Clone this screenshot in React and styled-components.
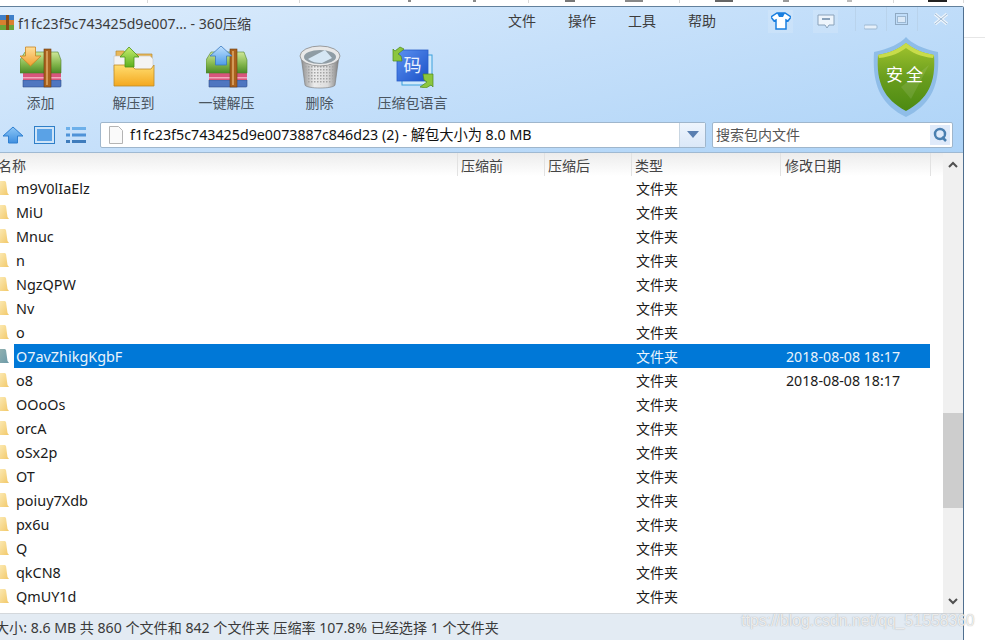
import React from 'react'
import styled, { createGlobalStyle } from 'styled-components'

const Global = createGlobalStyle`
  html, body {
    margin: 0;
    padding: 0;
    background: #fff;
    overflow: hidden;
  }
  body {
    font-family: 'Noto Sans', 'Noto Sans CJK SC', sans-serif;
  }
`

const Page = styled.div`
  width: 985px;
  height: 640px;
  position: relative;
  overflow: hidden;
  background: #fff;
`

const TopStrip = styled.div`
  height: 6px;
  width: 964px;
  display: flex;
  align-items: flex-start;
`

const StripCell = styled.div`
  width: ${p => p.w}px;
  height: 3px;
  flex: none;
  display: flex;
  align-items: flex-start;
  border-right: 1px solid #d9d9d9;
  box-sizing: border-box;
`

const Sliver = styled.div`
  width: ${p => p.w}px;
  height: 2px;
  margin-left: ${p => p.ml}px;
  background: ${p => p.c};
`

const SideLine = styled.div`
  position: absolute;
  left: 964px;
  right: 0;
  top: 37px;
  height: 1px;
  background: #e6e6e6;
`

const Window = styled.div`
  width: 964px;
  height: 634px;
  box-sizing: border-box;
  border-top: 1px solid #62809c;
  border-right: 1px solid #4f6f8f;
  border-top-right-radius: 2px;
  display: flex;
  flex-direction: column;
  overflow: hidden;
`

const Head = styled.div`
  height: 146px;
  flex: none;
  background: linear-gradient(168deg, #dcecfc 0%, #c6e0fa 45%, #add3f7 100%);
  border-bottom: 1px solid #9fb9d2;
  box-sizing: border-box;
`

const TitleRow = styled.div`
  height: 30px;
  display: flex;
  align-items: center;
`

const Title = styled.span`
  font-size: 14.1px;
  color: #3c3c3c;
  margin-left: 4px;
  margin-top: 2px;
  white-space: nowrap;
  width: 490px;
`

const Menu = styled.div`
  display: flex;
  margin-bottom: 4px;
`

const MenuItem = styled.span`
  width: 60px;
  font-size: 14px;
  color: #3d3d3d;
`

const SkinBtn = styled.div`
  width: 25px;
  height: 23px;
  margin-left: ${p => p.ml}px;
  margin-bottom: 2px;
  display: flex;
  align-items: center;
  justify-content: center;
  background: rgba(255, 255, 255, 0.14);
`

const Controls = styled.div`
  display: flex;
  margin-left: 17px;
  height: 24px;
  align-self: flex-start;
`

const Control = styled.div`
  width: ${p => p.w}px;
  height: 24px;
  border-left: 1px solid #b9d3ec;
  display: flex;
  align-items: ${p => p.end ? 'flex-end' : 'center'};
  justify-content: center;
  box-sizing: border-box;
`

const ToolRow = styled.div`
  height: 84px;
  display: flex;
  justify-content: space-between;
`

const Tools = styled.div`
  display: flex;
  margin-left: -6px;
  padding-top: 9px;
`

const Tool = styled.div`
  width: 93px;
  display: flex;
  flex-direction: column;
  align-items: center;
  gap: 6px;
`

const ToolIcon = styled.div`
  height: 42px;
  display: flex;
  align-items: center;
  justify-content: center;
`

const ToolLabel = styled.span`
  font-size: 14px;
  line-height: 18px;
  color: #4a5560;
  white-space: nowrap;
`

const ShieldWrap = styled.div`
  margin-right: 24px;
`

const AddressRow = styled.div`
  height: 27px;
  display: flex;
  align-items: center;
`

const NavBtn = styled.div`
  width: ${p => p.w}px;
  flex: none;
  display: flex;
  justify-content: center;
`

const Combo = styled.div`
  width: 606px;
  height: 26px;
  margin-left: 12px;
  background: #fff;
  border: 1px solid #9fb6cc;
  border-radius: 2px;
  box-sizing: border-box;
  display: flex;
  align-items: center;
  padding-left: 8px;
`

const ComboText = styled.span`
  flex: 1;
  font-size: 14.25px;
  color: #111;
  white-space: nowrap;
  margin-left: 7px;
  margin-bottom: 2px;
`

const ComboDrop = styled.div`
  width: 25px;
  height: 24px;
  border-left: 1px solid #c9d6e2;
  background: linear-gradient(#eef5fd, #dbe8f8);
  display: flex;
  align-items: center;
  justify-content: center;
`

const Search = styled.div`
  width: 241px;
  height: 26px;
  margin-left: 6px;
  background: #fff;
  border: 1px solid #9fb6cc;
  border-radius: 2px;
  box-sizing: border-box;
  display: flex;
  align-items: center;
  justify-content: space-between;
  padding: 0 2px 0 3px;
`

const SearchHint = styled.span`
  font-size: 14px;
  color: #555;
  margin-bottom: 2px;
`

const SearchBtn = styled.div`
  width: 20px;
  height: 20px;
  background: #dfeafa;
  display: flex;
  align-items: center;
  justify-content: center;
`

const Main = styled.div`
  flex: 1;
  display: flex;
  min-height: 0;
`

const ListPane = styled.div`
  width: 943px;
  display: flex;
  flex-direction: column;
  overflow: hidden;
`

const ListHead = styled.div`
  height: 23px;
  flex: none;
  display: flex;
  background: linear-gradient(#ececec, #fff);
`

const HeadCell = styled.div`
  width: ${p => p.w}px;
  flex: none;
  box-sizing: border-box;
  padding-left: ${p => p.pl || 0}px;
  margin-left: ${p => p.ml || 0}px;
  border-right: 1px solid #e2e2e2;
  font-size: 14px;
  line-height: 25px;
  color: #444;
  white-space: nowrap;
`

const Rows = styled.div`
  flex: 1;
  overflow: hidden;
`

const Row = styled.div`
  height: 24px;
  display: flex;
  align-items: center;
  color: #1a1a1a;
`

const FolderSlot = styled.div`
  width: 14px;
  flex: none;
  display: flex;
  overflow: hidden;
`

const RowBody = styled.div`
  width: 916px;
  height: 24px;
  display: flex;
  align-items: center;
  background: ${p => p.sel ? '#0078d7' : 'transparent'};
  color: ${p => p.sel ? '#eaf4fc' : '#1a1a1a'};
`

const Name = styled.span`
  width: 620px;
  flex: none;
  margin-left: 2px;
  font-size: 14.4px;
  white-space: nowrap;
`

const Kind = styled.span`
  width: 150px;
  flex: none;
  font-size: 14px;
`

const When = styled.span`
  font-size: 14.2px;
  white-space: nowrap;
`

const Scrollbar = styled.div`
  width: 20px;
  flex: none;
  background: #f0f0f0;
  display: flex;
  flex-direction: column;
  align-items: center;
`

const ArrowUp = styled.div`
  height: 22px;
  display: flex;
  align-items: center;
  flex: none;
`

const ArrowDown = styled.div`
  flex: 1;
  display: flex;
  align-items: flex-end;
  padding-bottom: 8px;
`

const Thumb = styled.div`
  width: 20px;
  height: 95px;
  margin-top: 238px;
  flex: none;
  background: #cdcdcd;
`

const Status = styled.div`
  height: 27px;
  flex: none;
  background: #e3ebf3;
  border-top: 1px solid #d4d8dc;
  box-sizing: border-box;
  font-size: 14.1px;
  line-height: 27px;
  color: #3a3a3a;
  white-space: nowrap;
  text-indent: -5px;
`

const Watermark = styled.div`
  position: absolute;
  left: 741px;
  top: 611px;
  font-family: 'Liberation Sans', sans-serif;
  font-size: 15.8px;
  line-height: 20px;
  color: rgba(255, 255, 255, 0.8);
  text-shadow: 0 0 1px rgba(120, 120, 120, 0.7);
  white-space: nowrap;
`

const Archive = ({ arrow = 'down', id }) => {
  const up = arrow === 'up'
  return (
    <svg width="42" height="42" viewBox="0 0 42 42">
      <defs>
        <linearGradient id={id + 'g'} x1="0" y1="0" x2="0" y2="1">
          <stop offset="0" stopColor="#cfe89a" />
          <stop offset=".6" stopColor="#80b44a" />
          <stop offset="1" stopColor="#4c8a28" />
        </linearGradient>
        <linearGradient id={id + 'a'} x1="0" y1="0" x2="0" y2="1">
          <stop offset="0" stopColor={up ? '#bfe0ff' : '#ffdf9a'} />
          <stop offset="1" stopColor={up ? '#4f9de8' : '#f0a030'} />
        </linearGradient>
      </defs>
      <path d="M3 34h38v6a1 1 0 0 1-1 1H3z" fill="#4f76c0" stroke="#2f4f8a" strokeWidth=".6" />
      <rect x="3" y="27" width="38" height="7" fill="#d8557c" />
      <rect x="3" y="31" width="38" height="1.500" fill="#f2a8bb" />
      <path d="M5 6h33l3 8v13H0V14z" fill={`url(#${id}g)`} stroke="#4f7f2c" strokeWidth=".6" />
      <rect x="24" y="3" width="7" height="38" fill="#a9621e" stroke="#6f3d10" strokeWidth=".6" />
      <rect x="26" y="5" width="2" height="34" fill="#d39a58" />
      {up
        ? <path d="M15 0 4 10h5.500v9h11v-9H26z" fill={`url(#${id}a)`} stroke="#3a78c0" strokeWidth=".8" />
        : <path d="M5.500 1h10v9H21L10.500 20 0 10h5.500z" fill={`url(#${id}a)`} stroke="#c98420" strokeWidth=".8" />}
    </svg>
  )
}

const OpenFolder = () => (
  <svg width="42" height="42" viewBox="0 0 42 42">
    <defs>
      <linearGradient id="ofg" x1="0" y1="0" x2="0" y2="1">
        <stop offset="0" stopColor="#ffdd70" />
        <stop offset="1" stopColor="#f4a81e" />
      </linearGradient>
      <linearGradient id="ofa" x1="0" y1="0" x2="0" y2="1">
        <stop offset="0" stopColor="#c8ee70" />
        <stop offset="1" stopColor="#5cb01e" />
      </linearGradient>
    </defs>
    <path d="M3 5h8l2 3h26v14H3z" fill="#e8b85a" stroke="#b98a30" strokeWidth=".7" />
    <path d="M1 10h36l3 3v12H1z" fill="#f4f4f4" stroke="#c4c4c4" strokeWidth=".6" />
    <path d="M1 19h17l4 4h16l3-4v21H1z" fill="url(#ofg)" stroke="#bd8a2a" strokeWidth=".8" />
    <path d="M16 1 7 11h5v10h9V11h5z" fill="url(#ofa)" stroke="#4d9418" strokeWidth=".8" />
  </svg>
)

const TrashCan = () => (
  <svg width="42" height="44" viewBox="0 0 42 44">
    <defs>
      <linearGradient id="tcg" x1="0" y1="0" x2="1" y2="0">
        <stop offset="0" stopColor="#8c8c8c" />
        <stop offset=".35" stopColor="#ececec" />
        <stop offset=".7" stopColor="#dcdcdc" />
        <stop offset="1" stopColor="#7d7d7d" />
      </linearGradient>
      <pattern id="tcp" width="3" height="3" patternUnits="userSpaceOnUse">
        <rect width="1.500" height="1.500" fill="#a4a4a4" />
      </pattern>
    </defs>
    <path d="M2 11 6 40c1 4 29 4 30 0l4-29z" fill="url(#tcg)" stroke="#777" strokeWidth=".6" />
    <path d="M6 20l3 18c2 1.500 22 1.500 24 0l3-18z" fill="url(#tcp)" />
    <ellipse cx="21" cy="11" rx="20" ry="10" fill="#e8e8e8" stroke="#888" strokeWidth=".8" />
    <ellipse cx="21" cy="12" rx="16" ry="7" fill="#8f9ca4" />
    <path d="M9 14 26 5l7 8-10 5c-6 0-10-1-14-4z" fill="#d5e6f4" />
  </svg>
)

const CodeBook = () => (
  <svg width="42" height="42" viewBox="0 0 42 42">
    <defs>
      <linearGradient id="cbg" x1="0" y1="0" x2="1" y2="1">
        <stop offset="0" stopColor="#5a90f0" />
        <stop offset="1" stopColor="#1c52c8" />
      </linearGradient>
    </defs>
    <rect x="10" y="9" width="30" height="30" fill="#cfe9fb" stroke="#3aa0dc" strokeWidth="1" />
    <rect x="5" y="4" width="31" height="31" fill="url(#cbg)" stroke="#2a5ec8" strokeWidth=".8" />
    <text x="20.500" y="26" textAnchor="middle" fontSize="18" fill="#e8f0ff" fontFamily="'Noto Sans CJK SC', sans-serif">码</text>
    <path d="M1 15V3l2 2 5-4 4 2-6 5 3 2 1 5z" fill="#8cc63e" stroke="#4f8a1a" strokeWidth=".7" />
    <path d="M41 28v13l-2-2-5 3-6-1 7-5-3-2-1-6z" fill="#8cc63e" stroke="#4f8a1a" strokeWidth=".7" />
  </svg>
)

const Shield = () => (
  <svg width="66" height="80" viewBox="0 0 66 80">
    <defs>
      <linearGradient id="shg" x1="0" y1="0" x2="0" y2="1">
        <stop offset="0" stopColor="#a2c42e" />
        <stop offset=".5" stopColor="#6a9e1e" />
        <stop offset="1" stopColor="#4c8a12" />
      </linearGradient>
    </defs>
    <path d="M33 0C28 6 16 12 1 15c-2 32 6 52 32 65 26-13 34-33 32-65C50 12 38 6 33 0z" fill="#8fbde8" />
    <path d="M33 6C27 11 17 16 5 18c-2 28 6 44 28 56 22-12 30-28 28-56C49 16 39 11 33 6z" fill="url(#shg)" />
    <path d="M33 6C27 11 17 16 5 18l1 3C18 20 28 15 33 11c5 4 15 9 27 10l1-3C49 16 39 11 33 6z" fill="#c8dc4a" />
    <path d="M56 28 38 62 28 50z" fill="#fff" opacity=".1" />
    <text x="33" y="44" textAnchor="middle" fontSize="17" letterSpacing="3" fill="#fff" fontFamily="'Noto Sans CJK SC', sans-serif">安全</text>
  </svg>
)

const Folder = ({ sel }) => (
  <svg width="10" height="16" viewBox="0 0 10 16">
    <defs>
      <linearGradient id={sel ? 'fds' : 'fdn'} x1="0" y1="0" x2="1" y2="1">
        <stop offset="0" stopColor={sel ? '#8fb0b0' : '#fbe8b0'} />
        <stop offset="1" stopColor={sel ? '#6c9aa8' : '#f2c868'} />
      </linearGradient>
    </defs>
    <path d="M0 1h5l1 1 1.500 11 1.500 2H0z" fill={`url(#${sel ? 'fds' : 'fdn'})`} />
  </svg>
)

const rows = [
  ['m9V0lIaElz'], ['MiU'], ['Mnuc'], ['n'], ['NgzQPW'], ['Nv'], ['o'],
  ['O7avZhikgKgbF', '2018-08-08 18:17', true],
  ['o8', '2018-08-08 18:17'],
  ['OOoOs'], ['orcA'], ['oSx2p'], ['OT'], ['poiuy7Xdb'], ['px6u'], ['Q'], ['qkCN8'], ['QmUY1d']
]

const tools = [
  ['添加', <Archive id="ad" />],
  ['解压到', <OpenFolder />],
  ['一键解压', <Archive id="ke" arrow="up" />],
  ['删除', <TrashCan />],
  ['压缩包语言', <CodeBook />]
]

export default function App() {
  return (
    <Page>
      <Global />
      <TopStrip>
        <StripCell w={148} />
        <StripCell w={152} />
        <StripCell w={229}>
          <Sliver ml={108} w={3} c="#8a8a8a" />
          <Sliver ml={62} w={3} c="#8a8a8a" />
        </StripCell>
        <StripCell w={151}>
          <Sliver ml={36} w={10} c="#777" />
          <Sliver ml={50} w={18} c="#888" />
        </StripCell>
        <StripCell w={214}>
          <Sliver ml={35} w={18} c="#666" />
          <Sliver ml={50} w={6} c="#999" />
          <Sliver ml={58} w={5} c="#bbb" />
        </StripCell>
        <StripCell w={70}>
          <Sliver ml={34} w={19} c="#222" />
        </StripCell>
      </TopStrip>
      <SideLine />
      <Window>
        <Head>
          <TitleRow>
            <svg width="14" height="17" viewBox="0 0 14 17">
              <rect y="1" width="14" height="5" fill="#3f7fc8" />
              <rect y="6" width="14" height="5" fill="#d98030" />
              <rect y="11" width="14" height="5" fill="#6aa63a" />
              <rect x="6" y="1" width="3" height="15" fill="#8a4c14" />
            </svg>
            <Title>f1fc23f5c743425d9e007... - 360压缩</Title>
            <Menu>
              {['文件', '操作', '工具', '帮助'].map(m => <MenuItem key={m}>{m}</MenuItem>)}
            </Menu>
            <SkinBtn ml={20}>
              <svg width="20" height="18" viewBox="0 0 20 18">
                <path d="M6 1h8l6 4-3 4-2-1v9H5V8L3 9 0 5z" fill="#fff" stroke="#1a7fe0" strokeWidth="1.500" />
                <path d="M6 1h8l-2 4H8z" fill="#1a7fe0" />
              </svg>
            </SkinBtn>
            <SkinBtn ml={20}>
              <svg width="18" height="15" viewBox="0 0 18 15">
                <path d="M1 1h16v10h-5l-2 3-2-3H1z" fill="#eef5fc" stroke="#8aa2ba" />
                <rect x="5" y="4" width="8" height="2" fill="#8aa2ba" />
              </svg>
            </SkinBtn>
            <Controls>
              <Control w={31} end>
                <svg width="14" height="14" viewBox="0 0 14 14"><rect y="8" width="13" height="4" rx="1" fill="#e6f0fa" stroke="#9db8d2" /></svg>
              </Control>
              <Control w={31}>
                <svg width="14" height="13" viewBox="0 0 14 13"><rect x=".5" y=".5" width="12" height="11" fill="none" stroke="#8fa9c2" /><rect x="2.500" y="3.500" width="8" height="6" fill="#dbe9f7" stroke="#9db8d2" /></svg>
              </Control>
              <Control w={46}>
                <svg width="16" height="14" viewBox="0 0 16 14"><path d="M2 2 14 12M14 2 2 12" stroke="#edf4fb" strokeWidth="3.200" /><path d="M2 2 14 12M14 2 2 12" stroke="#a3bcd4" strokeWidth="1" /></svg>
              </Control>
            </Controls>
          </TitleRow>
          <ToolRow>
            <Tools>
              {tools.map(([label, icon]) => (
                <Tool key={label}>
                  <ToolIcon>{icon}</ToolIcon>
                  <ToolLabel>{label}</ToolLabel>
                </Tool>
              ))}
            </Tools>
            <ShieldWrap><Shield /></ShieldWrap>
          </ToolRow>
          <AddressRow>
            <NavBtn w={25}>
              <svg width="22" height="18" viewBox="0 0 22 18">
                <defs>
                  <linearGradient id="upg" x1="0" y1="0" x2="0" y2="1">
                    <stop offset="0" stopColor="#8cc6f6" />
                    <stop offset="1" stopColor="#3f8fe0" />
                  </linearGradient>
                </defs>
                <path d="M11 1 1 10h5.500v7h9v-7H21z" fill="url(#upg)" stroke="#2f7fd0" />
              </svg>
            </NavBtn>
            <NavBtn w={38}>
              <svg width="21" height="18" viewBox="0 0 21 18"><rect x=".5" y=".5" width="20" height="17" fill="#cfe4f8" stroke="#2f7fc8" /><rect x="3" y="3" width="15" height="12" fill="#5aa2e6" /></svg>
            </NavBtn>
            <NavBtn w={25}>
              <svg width="20" height="18" viewBox="0 0 20 18">
                <rect y="1" width="4" height="3" fill="#6db0ea" /><rect x="6" y="1" width="14" height="3" fill="#6db0ea" />
                <rect y="7.500" width="4" height="3" fill="#4f93d8" /><rect x="6" y="7.500" width="14" height="3" fill="#4f93d8" />
                <rect y="14" width="4" height="3" fill="#3f7cbc" /><rect x="6" y="14" width="14" height="3" fill="#3f7cbc" />
              </svg>
            </NavBtn>
            <Combo>
              <svg width="14" height="18" viewBox="0 0 14 18"><path d="M.5.5h9l4 4v13H.5z" fill="#fafafa" stroke="#b4b4b4" /></svg>
              <ComboText>f1fc23f5c743425d9e0073887c846d23 (2) - 解包大小为 8.0 MB</ComboText>
              <ComboDrop>
                <svg width="12" height="7" viewBox="0 0 12 7"><path d="M0 0h12L6 7z" fill="#5a7fb0" /></svg>
              </ComboDrop>
            </Combo>
            <Search>
              <SearchHint>搜索包内文件</SearchHint>
              <SearchBtn>
                <svg width="15" height="15" viewBox="0 0 15 15"><circle cx="7" cy="7" r="5" fill="none" stroke="#4a7fb0" strokeWidth="2.500" /><path d="M9 10l4 4" stroke="#4a7fb0" strokeWidth="2.500" /></svg>
              </SearchBtn>
            </Search>
          </AddressRow>
        </Head>
        <Main>
          <ListPane>
            <ListHead>
              <HeadCell w={460} ml={-2}>名称</HeadCell>
              <HeadCell w={87} pl={3}>压缩前</HeadCell>
              <HeadCell w={87} pl={3}>压缩后</HeadCell>
              <HeadCell w={149} pl={3}>类型</HeadCell>
              <HeadCell w={150} pl={4}>修改日期</HeadCell>
            </ListHead>
            <Rows>
              {rows.map(([name, when, sel]) => (
                <Row key={name}>
                  <FolderSlot><Folder sel={sel} /></FolderSlot>
                  <RowBody sel={sel}>
                    <Name>{name}</Name>
                    <Kind>文件夹</Kind>
                    <When>{when}</When>
                  </RowBody>
                </Row>
              ))}
              <Row><FolderSlot><Folder /></FolderSlot></Row>
            </Rows>
          </ListPane>
          <Scrollbar>
            <ArrowUp>
              <svg width="10" height="7" viewBox="0 0 10 7"><path d="M1 6 5 2l4 4" fill="none" stroke="#505050" strokeWidth="2" /></svg>
            </ArrowUp>
            <Thumb />
            <ArrowDown>
              <svg width="10" height="7" viewBox="0 0 10 7"><path d="M1 1l4 4 4-4" fill="none" stroke="#505050" strokeWidth="2" /></svg>
            </ArrowDown>
          </Scrollbar>
        </Main>
        <Status>大小: 8.6 MB 共 860 个文件和 842 个文件夹 压缩率 107.8% 已经选择 1 个文件夹</Status>
      </Window>
      <Watermark>ttps://blog.csdn.net/qq_51558360</Watermark>
    </Page>
  )
}
